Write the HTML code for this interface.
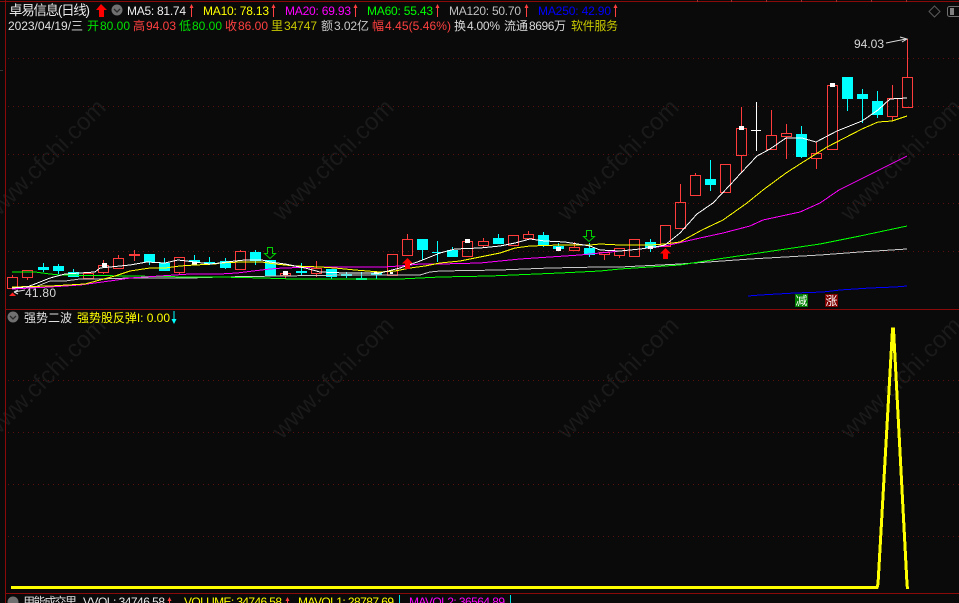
<!DOCTYPE html>
<html lang="zh">
<head>
<meta charset="utf-8">
<title>卓易信息</title>
<style>
html,body{margin:0;padding:0;background:#0a0a0a;width:959px;height:603px;overflow:hidden}
svg{display:block;position:absolute;left:0;top:0}
text{font-family:"Liberation Sans","Noto Sans CJK SC",sans-serif;font-size:12px;white-space:pre}
.wm{font-size:24px;fill:#1a1a1a}
</style>
</head>
<body>
<svg width="959" height="603" viewBox="0 0 959 603" xmlns="http://www.w3.org/2000/svg">
<rect width="959" height="603" fill="#0a0a0a"/>
<!-- watermarks -->
<g class="wm">
<text class="wm" transform="translate(-6,222) rotate(-45)" textLength="160">www.cfchi.com</text>
<text class="wm" transform="translate(282,222) rotate(-45)" textLength="160">www.cfchi.com</text>
<text class="wm" transform="translate(567,222) rotate(-45)" textLength="160">www.cfchi.com</text>
<text class="wm" transform="translate(850,222) rotate(-45)" textLength="160">www.cfchi.com</text>
<text class="wm" transform="translate(-6,440) rotate(-45)" textLength="160">www.cfchi.com</text>
<text class="wm" transform="translate(282,440) rotate(-45)" textLength="160">www.cfchi.com</text>
<text class="wm" transform="translate(567,440) rotate(-45)" textLength="160">www.cfchi.com</text>
<text class="wm" transform="translate(850,440) rotate(-45)" textLength="160">www.cfchi.com</text>
</g>
<!-- grid -->
<g shape-rendering="crispEdges">
<path d="M8 58.5H959M8 106.5H959M8 154.5H959M8 203.5H959M8 251.5H959M8 380.5H959M8 432.5H959M8 484.5H959M8 536.5H959" stroke="#5a1010" stroke-width="1" stroke-dasharray="1 4" fill="none"/>
<path d="M5.5 0V603M0 1.5H959M6 309.5H959M6 593.5H959" stroke="#8a0a0a" stroke-width="1" fill="none"/>
<path d="M697.5 0V2M731.5 0V2M766.5 0V2M801.5 0V2M836.5 0V2M871.5 0V2M906.5 0V2" stroke="#a03030" fill="none"/>
<path d="M0 70.5H3" stroke="#333" fill="none"/>
</g>
<!-- candles -->
<g shape-rendering="crispEdges" fill="none">
<path stroke="#ff3c3c" stroke-width="1" d="M7.5 277.5H17.5V288.5H7.5ZM12.5 275V277M22.5 270.5H32.5V277.5H22.5ZM27.5 277V280M83.5 273.5H93.5V278.5H83.5ZM98.5 265.5H108.5V272.5H98.5ZM103.5 260V265M103.5 272V274M113.5 258.5H123.5V268.5H113.5ZM118.5 255V258M129 254.5H140M129 255.5H140M134.5 250V261M174.5 257.5H184.5V272.5H174.5ZM179.5 272V275M235.5 251.5H245.5V269.5H235.5ZM240.5 250V251M280.5 273.5H290.5V275.5H280.5ZM285.5 275V279M311.5 268.5H321.5V273.5H311.5ZM316.5 261V268M316.5 273V277M387.5 254.5H397.5V275.5H387.5ZM402.5 239.5H412.5V255.5H402.5ZM407.5 234V239M462.5 241.5H472.5V256.5H462.5ZM478.5 241.5H488.5V245.5H478.5ZM483.5 238V241M483.5 245V247M508.5 235.5H518.5V245.5H508.5ZM523.5 234.5H533.5V238.5H523.5ZM528.5 231V234M528.5 238V240M569.5 247.5H579.5V250.5H569.5ZM574.5 242V247M599.5 252.5H609.5V254.5H599.5ZM604.5 254V260M614.5 248.5H624.5V255.5H614.5ZM619.5 255V258M629.5 239.5H639.5V256.5H629.5ZM660.5 225.5H670.5V246.5H660.5ZM675.5 202.5H685.5V228.5H675.5ZM680.5 184V202M690.5 175.5H700.5V195.5H690.5ZM695.5 173V175M720.5 164.5H730.5V192.5H720.5ZM736.5 128.5H746.5V155.5H736.5ZM741.5 107V128M741.5 155V173M766.5 135.5H776.5V149.5H766.5ZM771.5 110V135M781.5 133.5H791.5V136.5H781.5ZM786.5 124V133M786.5 136V159M811.5 153.5H821.5V158.5H811.5ZM816.5 142V153M816.5 158V169M827.5 85.5H837.5V149.5H827.5ZM887.5 98.5H897.5V116.5H887.5ZM892.5 85V98M892.5 116V121M902.5 77.5H912.5V107.5H902.5ZM907.5 39V77"/>
<path stroke="#00ffff" stroke-width="1" d="M43.5 263V272M58.5 264V274M73.5 269V277M149.5 254V265M164.5 258V271M194.5 255V265M209.5 257V264M225.5 258V269M255.5 250V265M301.5 263V276M331.5 269V279M346.5 272V278M361.5 272V280M376.5 273V279M422.5 239V260M437.5 241V262M452.5 247V257M498.5 234V244M543.5 232V247M558.5 243V249M589.5 243V257M650.5 239V252M710.5 160V191M801.5 126V158M847.5 77V111M862.5 89V123M877.5 91V118"/>
<path fill="#00ffff" d="M38 267h11v3H38zM53 266h11v5H53zM68 272h11v5H68zM144 254h11v8h-11zM159 263h11v8h-11zM189 260h11v2h-11zM204 262h11v2h-11zM220 261h11v7h-11zM250 252h11v9h-11zM265 260h11v16h-11zM296 271h11v2h-11zM326 269h11v8h-11zM341 274h11v2h-11zM356 278h11v2h-11zM371 273h11v2h-11zM417 239h11v11h-11zM432 252h11v1h-11zM447 250h11v7h-11zM493 238h11v6h-11zM538 235h11v10h-11zM553 246h11v3h-11zM584 248h11v7h-11zM645 242h11v6h-11zM705 179h11v6h-11zM796 134h11v23h-11zM842 77h11v22h-11zM857 94h11v5h-11zM872 101h11v14h-11z"/>
<path stroke="#ffffff" stroke-width="1" d="M751 130.5H761M756.5 102V151"/>
<path fill="#ffffff" d="M102 263h5v4h-5zM192 262h5v3h-5zM283 271h5v4h-5zM374 272h5v2h-5zM390 272h3v2h-3zM465 239h5v4h-5zM556 247h5v4h-5zM648 246h5v3h-5zM739 126h5v4h-5zM830 83h5v4h-5z"/>
</g>
<!-- moving averages -->
<g fill="none" stroke-width="1" shape-rendering="crispEdges">
<polyline stroke="#0000ff" points="748,296 760,295 795,293 823,292 840,290 870,288 895,287 907,286"/>
<polyline stroke="#c8c8c8" points="20,287 35,287 50,281 65,281 80,279 100,279 130,278 190,278 220,277 280,276 350,275 420,275 430,272 440,271 500,270 550,268 600,267 620,267 660,265 680,264 750,259 820,255 860,252 907,249"/>
<polyline stroke="#00ff00" points="12,272 35,272 50,274 60,275 130,276 190,277 220,277 263,278 293,279 400,279 440,277 490,276 560,273 600,271 620,269 650,267 680,265 718,259 820,244 860,236 907,226"/>
<polyline stroke="#ff00ff" points="12,289 50,287 80,285 117,280 130,278 190,274 220,274 237,273 253,271 270,269 283,268 320,267 340,267 383,267 400,266 420,264 440,264 480,263 520,259 580,255 640,249 665,246 700,238 723,233 750,226 763,220 800,212 820,203 839,190 907,156"/>
<polyline stroke="#ffff00" points="12,287 50,286 85,284 100,280 115,276 130,271 150,268 165,268 180,266 195,265 215,264 220,263 240,262 262,262 275,264 295,266 320,267 335,268 355,270 380,272 395,271 410,268 425,266 440,263 460,261 480,257 500,253 515,248 530,246 560,245 590,245 600,244 620,245 650,245 665,244 680,242 702,230 723,220 747,203 763,190 786,173 800,164 827,147 862,129 878,122 892,121 907,116"/>
<polyline stroke="#ffffff" points="12,288 27,287 35,284 50,278 65,274 80,273 95,272 100,268 130,265 147,262 165,263 178,260 195,262 210,264 220,263 235,261 245,260 262,260 270,262 285,264 295,266 305,268 320,272 345,273 380,273 400,268 420,261 440,253 455,249 480,248 500,246 515,243 530,239 545,241 565,242 590,246 600,250 620,251 640,249 655,247 665,245 680,233 697,214 713,203 730,185 741,173 757,156 770,149 786,138 802,138 816,142 837,131 862,121 878,110 890,99 907,98"/>
</g>
<!-- signal arrows -->
<g>
<path fill="#ff0000" d="M402 263.5L407.5 258 413 263.5H410V269H405V263.5ZM660 253.5L665.5 248 671 253.5H668V259H663V253.5ZM96 10L101 4 107 10H104V17H99V10Z"/>
<path fill="none" stroke="#00d000" stroke-width="1" d="M267.5 247.5H272.5V253.5H275.5L270 258.5 264.5 253.5H267.5ZM586.5 230.5H591.5V236.5H594.5L589 241.5 583.5 236.5H586.5Z"/>
</g>
<!-- high/low labels -->
<path d="M886 43L906 39M900 37L907 39 902 42" stroke="#dddddd" fill="none" stroke-width="1"/>
<text x="854" y="48" fill="#d8d8d8" textLength="30">94.03</text>
<path d="M9 296L12.5 292.5 16 296Z" fill="#ff2020"/>
<path d="M14 292L25 290M14 292L18 290M14 292L18 294" stroke="#dddddd" fill="none"/>
<text x="25" y="297" fill="#d8d8d8" textLength="31">41.80</text>
<!-- badges -->
<rect x="795" y="294" width="13" height="13" fill="#008000"/>
<text x="795.5" y="305" fill="#fff">减</text>
<rect x="825" y="294" width="13" height="13" fill="#800000"/>
<text x="825.5" y="305" fill="#fff">涨</text>
<!-- spike line -->
<polyline points="11,587.5 877,587.5 878,584 892.5,329 893.5,329 907,584 907.5,589" fill="none" stroke="#ffff00" stroke-width="3" shape-rendering="crispEdges"/>
<!-- header 1 -->
<text x="9" y="15" fill="#e8e8e8" style="font-size:13.5px" textLength="81">卓易信息(日线)</text>
<circle cx="117" cy="10" r="5.5" fill="#707070"/>
<path d="M114 9L117 12 120 9" stroke="#2a2a2a" stroke-width="1.3" fill="none"/>
<text x="127" y="15" fill="#f0f0f0" textLength="59">MA5: 81.74</text>
<text x="203" y="15" fill="#ffff00" textLength="66">MA10: 78.13</text>
<text x="285" y="15" fill="#ff00ff" textLength="66">MA20: 69.93</text>
<text x="367" y="15" fill="#00ff00" textLength="66">MA60: 55.43</text>
<text x="449" y="15" fill="#c0c0c0" textLength="72">MA120: 50.70</text>
<text x="538" y="15" fill="#0000ff" textLength="73">MA250: 42.90</text>
<path fill="#ff4040" d="M191 8H189.5L191.5 4 193.5 8H192V17H191ZM273 8H271.5L273.5 4 275.5 8H274V17H273ZM355 8H353.5L355.5 4 357.5 8H356V17H355ZM437 8H435.5L437.5 4 439.5 8H438V17H437ZM526 8H524.5L526.5 4 528.5 8H527V17H526ZM615 8H613.5L615.5 4 617.5 8H616V17H615Z"/>
<!-- header 2 -->
<text x="8" y="30" fill="#e0e0e0" textLength="75">2023/04/19/三</text>
<text x="87" y="30" fill="#00e000">开</text>
<text x="100" y="30" fill="#00e000" textLength="30">80.00</text>
<text x="133" y="30" fill="#ff4040">高</text>
<text x="146" y="30" fill="#ff4040" textLength="30">94.03</text>
<text x="179" y="30" fill="#00e000">低</text>
<text x="192" y="30" fill="#00e000" textLength="30">80.00</text>
<text x="225" y="30" fill="#ff4040">收</text>
<text x="238" y="30" fill="#ff4040" textLength="30">86.00</text>
<text x="271" y="30" fill="#c8c800">里</text>
<text x="284" y="30" fill="#c8c800" textLength="33">34747</text>
<text x="321" y="30" fill="#c8c8c8">额</text>
<text x="334" y="30" fill="#c8c8c8" textLength="35">3.02亿</text>
<text x="372" y="30" fill="#ff4040">幅</text>
<text x="385" y="30" fill="#ff4040" textLength="66">4.45(5.46%)</text>
<text x="454" y="30" fill="#d8d8d8">换</text>
<text x="467" y="30" fill="#d8d8d8" textLength="33">4.00%</text>
<text x="504" y="30" fill="#d8d8d8" textLength="24">流通</text>
<text x="529" y="30" fill="#d8d8d8" textLength="37">8696万</text>
<text x="571" y="30" fill="#c8c800" textLength="47">软件服务</text>
<!-- top-right icons -->
<path d="M934.5 6L940 11.5 934.5 17 929 11.5Z" fill="none" stroke="#5a5a5a"/>
<rect x="947.5" y="6.5" width="14" height="10" rx="2" fill="none" stroke="#707070"/>
<rect x="950" y="8" width="4" height="7" fill="#808080"/>
<!-- pane 2 header -->
<circle cx="13" cy="317" r="5.5" fill="#707070"/>
<path d="M10 316L13 319 16 316" stroke="#2a2a2a" stroke-width="1.3" fill="none"/>
<text x="24" y="322" fill="#e0e0e0" textLength="48">强势二波</text>
<text x="77" y="322" fill="#ffff00" textLength="93">强势股反弹I: 0.00</text>
<path fill="#00ffff" d="M173.5 311H174.5V319H176.5L174 324 171.5 319H173.5Z"/>
<!-- pane 3 header -->
<circle cx="13" cy="602" r="5.5" fill="#707070"/>
<text x="23" y="606" fill="#e0e0e0" textLength="54">用能成交里</text>
<text x="83" y="606" fill="#e8e8e8" textLength="82">VVOL: 34746.58</text>
<text x="184" y="606" fill="#ffff00" textLength="98">VOLUME: 34746.58</text>
<text x="298" y="606" fill="#ffff00" textLength="96">MAVOL1: 28787.69</text>
<text x="409" y="606" fill="#ff00ff" textLength="96">MAVOL2: 36564.89</text>
<path fill="#ff4040" d="M169 601H167.5L169.5 597 171.5 601H170V603H169ZM287 601H285.5L287.5 597 289.5 601H288V603H287Z"/>
<path d="M399.5 595V603M510.5 595V603" stroke="#00e0e0" shape-rendering="crispEdges"/>
</svg>
</body>
</html>
